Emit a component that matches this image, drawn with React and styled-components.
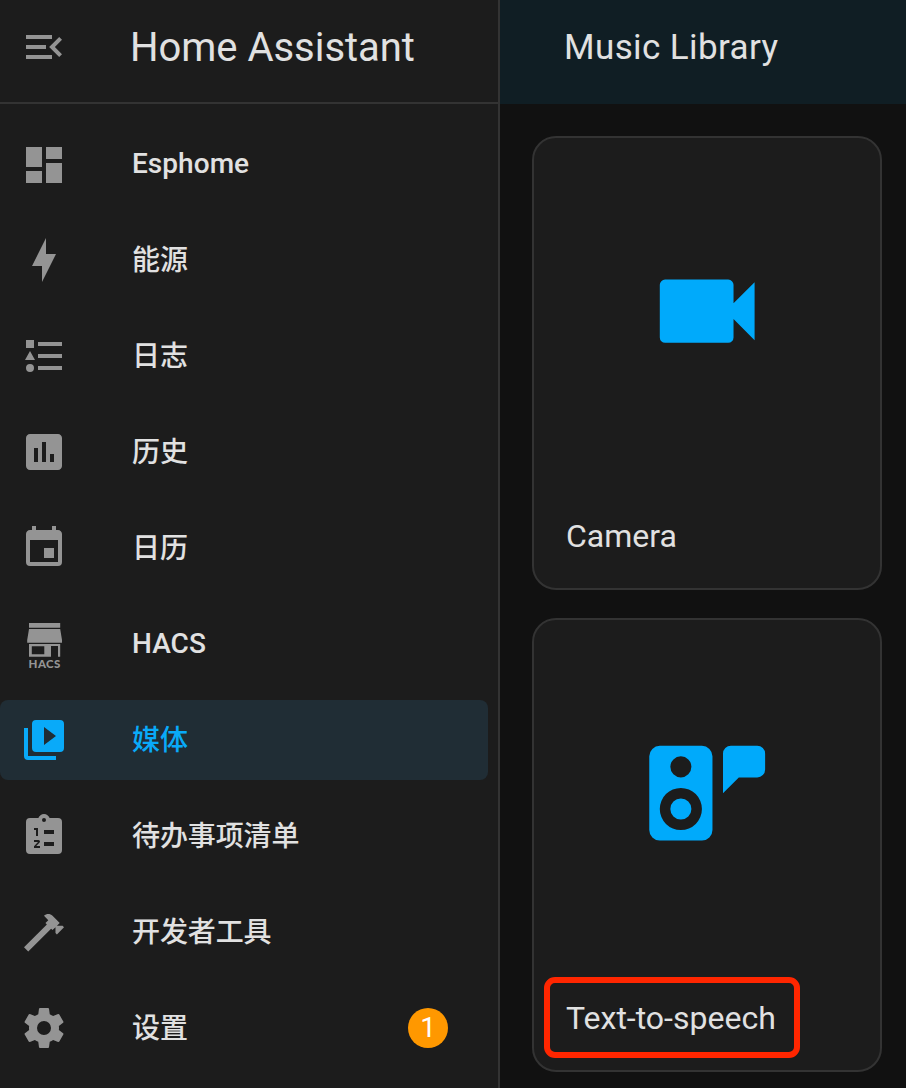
import React from "react";
import styled, { createGlobalStyle } from "styled-components";

const GlobalStyle = createGlobalStyle`
  *, *::before, *::after { box-sizing: border-box; }
  body {
    margin: 0;
    background: #111111;
    color: #e1e1e1;
    font-family: Roboto, "Noto Sans CJK SC", sans-serif;
    -webkit-font-smoothing: antialiased;
    overflow: hidden;
  }
`;

const Page = styled.div`
  display: flex;
  width: 906px;
  height: 1088px;
  overflow: hidden;
`;

const Sidebar = styled.aside`
  flex: none;
  width: 500px;
  height: 100%;
  background: #1c1c1c;
  border-right: 2px solid #333333;
`;

const SidebarHeader = styled.header`
  display: flex;
  align-items: center;
  height: 104px;
  padding: 0 20px 8px;
  border-bottom: 2px solid #333333;
  color: #949494;
`;

const SidebarTitle = styled.h1`
  margin: 0 0 0 62px;
  padding-top: 2px;
  font-size: 40px;
  line-height: 48px;
  font-weight: 400;
  color: #e1e1e1;
  letter-spacing: -0.03px;
  white-space: nowrap;
`;

const Nav = styled.nav`
  display: flex;
  flex-direction: column;
  gap: 16px;
  padding: 20px 10px 0 0;
`;

const NavItem = styled.a`
  display: flex;
  align-items: center;
  height: 80px;
  padding: 0 40px 0 20px;
  border-radius: 8px;
  background: ${(p) => (p.$active ? "#202d35" : "transparent")};
  color: ${(p) => (p.$active ? "#09aaf9" : "#949494")};
`;

const NavLabel = styled.span`
  flex: 1;
  margin-left: 64px;
  padding-top: ${(p) => (p.$latin ? 0 : 2)}px;
  font-size: 28px;
  line-height: 40px;
  font-weight: 500;
  letter-spacing: ${(p) => (p.$latin ? "0.05px" : "-0.1px")};
  color: ${(p) => (p.$active ? "#09aaf9" : "#e1e1e1")};
`;

const Badge = styled.span`
  display: flex;
  align-items: center;
  justify-content: center;
  width: 40px;
  height: 40px;
  border-radius: 50%;
  background: #ff9800;
  color: #ffffff;
  font-size: 28px;
  line-height: 40px;
`;

const Glyph = styled.svg`
  display: block;
  flex: none;
  width: ${(p) => p.$size || 48}px;
  height: ${(p) => p.$size || 48}px;
  fill: currentColor;
  fill-rule: evenodd;
  overflow: visible;
`;

const GlyphText = styled.text`
  font-family: Lato, sans-serif;
  font-weight: 900;
  font-size: 11.5px;
`;

const Main = styled.main`
  flex: 1;
  display: flex;
  flex-direction: column;
`;

const MainHeader = styled.header`
  display: flex;
  align-items: center;
  height: 104px;
  padding: 0 64px 9px;
  background: #101e24;
`;

const MainTitle = styled.h2`
  margin: 0;
  font-size: 35px;
  line-height: 44px;
  font-weight: 400;
  letter-spacing: 0.4px;
  white-space: nowrap;
`;

const Cards = styled.div`
  display: grid;
  grid-auto-rows: 454px;
  gap: 28px;
  padding: 32px 24px 0 32px;
`;

const Card = styled.article`
  display: flex;
  flex-direction: column;
  border: 2px solid #333333;
  border-radius: 24px;
  background: #1c1c1c;
`;

const Thumbnail = styled.div`
  display: flex;
  align-items: center;
  justify-content: center;
  height: 346px;
  color: #00aafb;
`;

const CardLabel = styled.div`
  position: relative;
  align-self: flex-start;
  margin: 28px 0 0 32px;
  font-size: 32px;
  line-height: 48px;
  white-space: nowrap;
`;

const Highlight = styled.div`
  position: absolute;
  top: -17px;
  left: -22px;
  width: 256px;
  height: 81px;
  border: 6px solid #ff2600;
  border-radius: 11px;
`;

const paths = {
  menu: "M21,15.61L19.59,17L14.58,12L19.59,7L21,8.39L17.44,12L21,15.61M3,6H16V8H3V6M3,13V11H13V13H3M3,18V16H16V18H3Z",
  dashboard: "M13,3.5V9.5H21V3.5M13,21.5H21V11.5H13M3,21.5H11V15.5H3M3,13.5H11V3.5H3V13.5Z",
  energy: "M11,15H6L13,1V9H18L11,23V15Z",
  logbook: "M5,9.5L7.5,14H2.5L5,9.5M3,4H7V8H3V4M5,20A2,2 0 0,0 7,18A2,2 0 0,0 5,16A2,2 0 0,0 3,18A2,2 0 0,0 5,20M9,5V7H21V5H9M9,19H21V17H9V19M9,13H21V11H9V13Z",
  history: "M9 17H7V10H9V17M13 17H11V7H13V17M17 17H15V13H17V17M19 3H5C3.9 3 3 3.9 3 5V19C3 20.1 3.9 21 5 21H19C20.1 21 21 20.1 21 19V5C21 3.9 20.1 3 19 3Z",
  calendar: "M19,19H5V8H19M16,1V3H8V1H6V3H5C3.89,3 3,3.89 3,5V19A2,2 0 0,0 5,21H19A2,2 0 0,0 21,19V5C21,3.89 20.1,3 19,3H18V1M17,12H12V17H17V12Z",
  media: "M4,6H2V20A2,2 0 0,0 4,22H18V20H4V6M20,2H8A2,2 0 0,0 6,4V16A2,2 0 0,0 8,18H20A2,2 0 0,0 22,16V4A2,2 0 0,0 20,2M12,14.5V5.5L18,10L12,14.5Z",
  todo: "M12,3A1,1 0 0,1 13,4A1,1 0 0,1 12,5A1,1 0 0,1 11,4A1,1 0 0,1 12,3M19,3H14.82C14.4,1.84 13.3,1 12,1C10.7,1 9.6,1.84 9.18,3H5A2,2 0 0,0 3,5V19A2,2 0 0,0 5,21H19A2,2 0 0,0 21,19V5A2,2 0 0,0 19,3M7,8H9V12H8V9H7V8M10,17V18H7V17.08L9,15H7V14H9.25A0.75,0.75 0 0,1 10,14.75C10,14.95 9.92,15.14 9.79,15.27L8.12,17H10M17,17H12V15H17V17M17,11H12V9H17V11Z",
  tools: "M2 19.63L13.43 8.2L12.72 7.5L14.14 6.07L12 3.89C13.2 2.7 15.09 2.7 16.27 3.89L19.87 7.5L18.45 8.91H21.29L22 9.62L18.45 13.21L17.74 12.5V9.62L16.27 11.04L15.56 10.33L4.13 21.76L2 19.63Z",
  settings: "M12,15.5A3.5,3.5 0 0,1 8.5,12A3.5,3.5 0 0,1 12,8.5A3.5,3.5 0 0,1 15.5,12A3.5,3.5 0 0,1 12,15.5M19.43,12.97C19.47,12.65 19.5,12.33 19.5,12C19.5,11.67 19.47,11.34 19.43,11L21.54,9.37C21.73,9.22 21.78,8.95 21.66,8.73L19.66,5.27C19.54,5.05 19.27,4.96 19.05,5.05L16.56,6.05C16.04,5.66 15.5,5.32 14.87,5.07L14.5,2.42C14.46,2.18 14.25,2 14,2H10C9.75,2 9.54,2.18 9.5,2.42L9.13,5.07C8.5,5.32 7.96,5.66 7.44,6.05L4.95,5.05C4.73,4.96 4.46,5.05 4.34,5.27L2.34,8.73C2.21,8.95 2.27,9.22 2.46,9.37L4.57,11C4.53,11.34 4.5,11.67 4.5,12C4.5,12.33 4.53,12.65 4.57,12.97L2.46,14.63C2.27,14.78 2.21,15.05 2.34,15.27L4.34,18.73C4.46,18.95 4.73,19.03 4.95,18.95L7.44,17.94C7.96,18.34 8.5,18.68 9.13,18.93L9.5,21.58C9.54,21.82 9.75,22 10,22H14C14.25,22 14.46,21.82 14.5,21.58L14.87,18.93C15.5,18.67 16.04,18.34 16.56,17.94L19.05,18.95C19.27,19.03 19.54,18.95 19.66,18.73L21.66,15.27C21.78,15.05 21.73,14.78 21.54,14.63L19.43,12.97Z",
  camera: "M17,10.5V7A1,1 0 0,0 16,6H4A1,1 0 0,0 3,7V17A1,1 0 0,0 4,18H16A1,1 0 0,0 17,17V13.5L21,17.5V6.5L17,10.5Z",
  speech: "M3,3H11A2,2 0 0,1 13,5V19A2,2 0 0,1 11,21H3A2,2 0 0,1 1,19V5A2,2 0 0,1 3,3M7,5A2,2 0 0,0 7,9A2,2 0 0,0 7,5M7,11A4,4 0 0,0 7,19A4,4 0 0,0 7,11M7,13A2,2 0 0,1 7,17A2,2 0 0,1 7,13M16.5,3H21.5A1.5,1.5 0 0,1 23,4.5V7.5A1.5,1.5 0 0,1 21.5,9H18L15,12V4.5A1.5,1.5 0 0,1 16.5,3Z",
};

const Icon = ({ name, size }) => (
  <Glyph viewBox="0 0 24 24" $size={size} aria-hidden="true">
    <path d={paths[name]} />
  </Glyph>
);

const HacsIcon = () => (
  <Glyph viewBox="0 0 48 48">
    <path d="M9,3H40.2V7.7H9ZM9,9H40.2L42,20V22.7H7.2V20ZM9,24H40.2V36.7H38V26H31V36.7H9ZM11.8,26.2V34.2H24.3V26.2Z" />
    <GlyphText x="8.6" y="47.7" textLength="31.8" lengthAdjust="spacing">HACS</GlyphText>
  </Glyph>
);

const navItems = [
  { icon: "dashboard", label: "Esphome", latin: true },
  { icon: "energy", label: "能源" },
  { icon: "logbook", label: "日志" },
  { icon: "history", label: "历史" },
  { icon: "calendar", label: "日历" },
  { icon: "hacs", label: "HACS", latin: true },
  { icon: "media", label: "媒体", active: true },
  { icon: "todo", label: "待办事项清单" },
  { icon: "tools", label: "开发者工具" },
  { icon: "settings", label: "设置", badge: 1 },
];

const cards = [
  { icon: "camera", label: "Camera" },
  { icon: "speech", label: "Text-to-speech", highlighted: true },
];

export default function App() {
  return (
    <>
      <GlobalStyle />
      <Page>
        <Sidebar>
          <SidebarHeader>
            <Icon name="menu" />
            <SidebarTitle>Home Assistant</SidebarTitle>
          </SidebarHeader>
          <Nav>
            {navItems.map((item) => (
              <NavItem key={item.label} $active={item.active}>
                {item.icon === "hacs" ? <HacsIcon /> : <Icon name={item.icon} />}
                <NavLabel $active={item.active} $latin={item.latin}>{item.label}</NavLabel>
                {item.badge && <Badge>{item.badge}</Badge>}
              </NavItem>
            ))}
          </Nav>
        </Sidebar>
        <Main>
          <MainHeader>
            <MainTitle>Music Library</MainTitle>
          </MainHeader>
          <Cards>
            {cards.map((card) => (
              <Card key={card.label}>
                <Thumbnail>
                  <Icon name={card.icon} size={126.4} />
                </Thumbnail>
                <CardLabel>
                  {card.label}
                  {card.highlighted && <Highlight />}
                </CardLabel>
              </Card>
            ))}
          </Cards>
        </Main>
      </Page>
    </>
  );
}
